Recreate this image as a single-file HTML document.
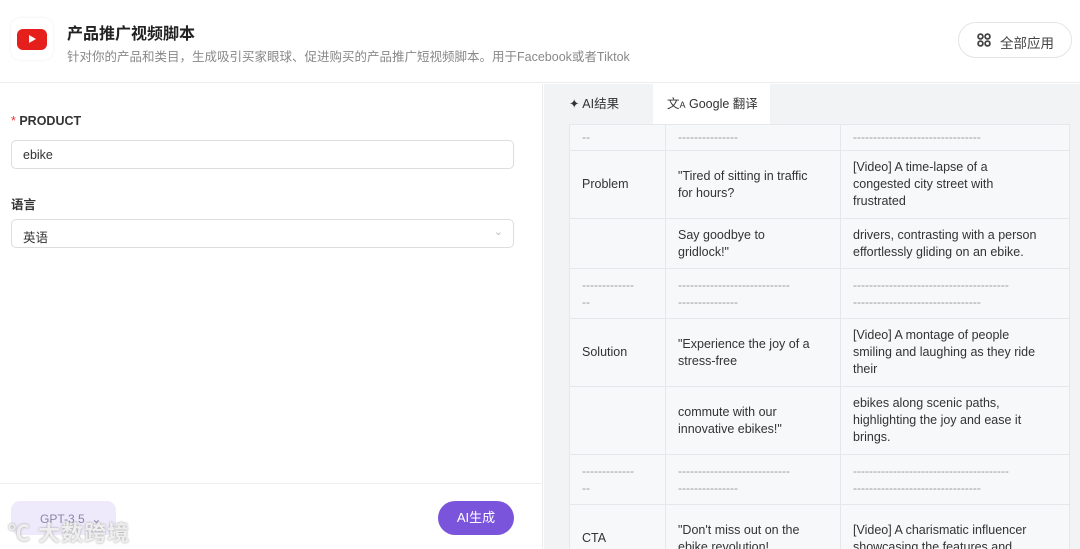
<!DOCTYPE html>
<html><head><meta charset="utf-8"><style>
*{box-sizing:border-box;margin:0;padding:0}
html,body{width:1080px;height:549px;overflow:hidden}
body{background:#fff;font-family:"Liberation Sans","Noto Sans CJK SC",sans-serif;color:#333;position:relative}
.hdr{position:absolute;left:0;top:0;width:1080px;height:83px;border-bottom:1px solid #ececec}
.logo{position:absolute;left:11px;top:18px;width:42px;height:42px;border-radius:10px;background:#fff;box-shadow:0 0 3px rgba(0,0,0,.08)}
.logo div{position:absolute;left:6px;top:11px;width:30px;height:21px;background:#e5201c;border-radius:6px}
.logo div:after{content:"";position:absolute;left:12px;top:6px;border-left:7px solid #fff;border-top:4.5px solid transparent;border-bottom:4.5px solid transparent}
.t1{position:absolute;left:67px;top:20px;font-size:16px;font-weight:bold;color:#222}
.t2{position:absolute;left:67px;top:46px;font-size:12.5px;color:#888}
.all{position:absolute;left:958px;top:22px;width:114px;height:36px;border:1px solid #e4e4e4;border-radius:18px;font-size:13.5px;color:#444;padding:9px 0 0 41px}
.all i{position:absolute;left:18px;top:10px;width:14px;height:14px}
.left{position:absolute;left:0;top:84px;width:543px;height:465px;border-right:1px solid #ececec}
.lbl{position:absolute;left:11px;font-size:12.5px;font-weight:bold;color:#333}
.inp{position:absolute;left:11px;width:503px;height:29px;border:1px solid #ddd;border-radius:5px;font-size:12.5px;padding:7px 0 0 11px;color:#333}
.foot{position:absolute;left:0;top:399px;width:543px;border-top:1px solid #eee;height:66px}
.gpt{position:absolute;left:11px;top:17px;width:105px;height:34px;background:#efeafb;border-radius:9px;font-size:12px;color:#8a83a8;padding:11px 0 0 29px}
.wm{position:absolute;left:8px;top:32px;font-size:22px;color:#eee;font-weight:bold;text-shadow:0 0 2px #999;letter-spacing:1px}
.gen{position:absolute;left:438px;top:17px;width:76px;height:34px;background:#7a55dc;border-radius:17px;color:#fff;font-size:13px;text-align:center;line-height:34px}
.right{position:absolute;left:544px;top:84px;width:536px;height:465px;background:#f2f3f5;overflow:hidden}
.tab{position:absolute;top:0;height:40px;font-size:12.5px;color:#333;line-height:40px}
table{position:absolute;left:25px;top:40px;border-collapse:collapse;font-size:12.5px;color:#333;background:#f7f8f9;width:500px;table-layout:fixed}
td{border:1px solid #e6e7ea;padding:0 8px 0 12px;vertical-align:middle;line-height:17px;overflow:hidden;white-space:nowrap}
.d{color:#999;font-size:12px;line-height:17px}
</style></head><body>
<div class="hdr">
<div class="logo"><div></div></div>
<div class="t1">产品推广视频脚本</div>
<div class="t2">针对你的产品和类目，生成吸引买家眼球、促进购买的产品推广短视频脚本。用于Facebook或者Tiktok</div>
<div class="all"><i><svg width="14" height="14" viewBox="0 0 14 14" fill="none" stroke="#444" stroke-width="1.8"><circle cx="3.5" cy="3.5" r="2.4"/><circle cx="10.5" cy="3.5" r="2.4"/><circle cx="3.5" cy="10.5" r="2.4"/><circle cx="10.5" cy="10.5" r="2.4"/></svg></i>全部应用</div>
</div>
<div class="left">
<div class="lbl" style="top:30px"><span style="color:#e33;font-weight:normal">*</span> PRODUCT</div>
<div class="inp" style="top:56px">ebike</div>
<div class="lbl" style="top:110px">语言</div>
<div class="inp" style="top:135px">英语<span style="position:absolute;right:10px;top:5px;color:#bbb;font-size:11px">&#8964;</span></div>
<div class="foot">
<div class="gpt">GPT-3.5 &nbsp;⌄</div>
<div class="wm">℃ 大数跨境</div>
<div class="gen">AI生成</div>
</div>
</div>
<div class="right">
<div class="tab" style="left:25px">✦ AI结果</div>
<div class="tab" style="left:109px;width:117px;background:#fff;padding-left:14px">文<span style="font-size:9px">A</span> Google 翻译</div>
<table>
<colgroup><col style="width:96px"><col style="width:175px"><col style="width:229px"></colgroup>
<tr style="height:26px"><td class="d">--</td><td class="d">---------------</td><td class="d">--------------------------------</td></tr>
<tr style="height:68px"><td>Problem</td><td>"Tired of sitting in traffic<br>for hours?</td><td>[Video] A time-lapse of a<br>congested city street with<br>frustrated</td></tr>
<tr style="height:50px"><td></td><td>Say goodbye to<br>gridlock!"</td><td>drivers, contrasting with a person<br>effortlessly gliding on an ebike.</td></tr>
<tr style="height:50px"><td class="d">-------------<br>--</td><td class="d">----------------------------<br>---------------</td><td class="d">---------------------------------------<br>--------------------------------</td></tr>
<tr style="height:68px"><td>Solution</td><td>"Experience the joy of a<br>stress-free</td><td>[Video] A montage of people<br>smiling and laughing as they ride<br>their</td></tr>
<tr style="height:68px"><td></td><td>commute with our<br>innovative ebikes!"</td><td>ebikes along scenic paths,<br>highlighting the joy and ease it<br>brings.</td></tr>
<tr style="height:50px"><td class="d">-------------<br>--</td><td class="d">----------------------------<br>---------------</td><td class="d">---------------------------------------<br>--------------------------------</td></tr>
<tr style="height:68px"><td>CTA</td><td>"Don't miss out on the<br>ebike revolution!</td><td>[Video] A charismatic influencer<br>showcasing the features and</td></tr>
</table>
</div>
</body></html>
